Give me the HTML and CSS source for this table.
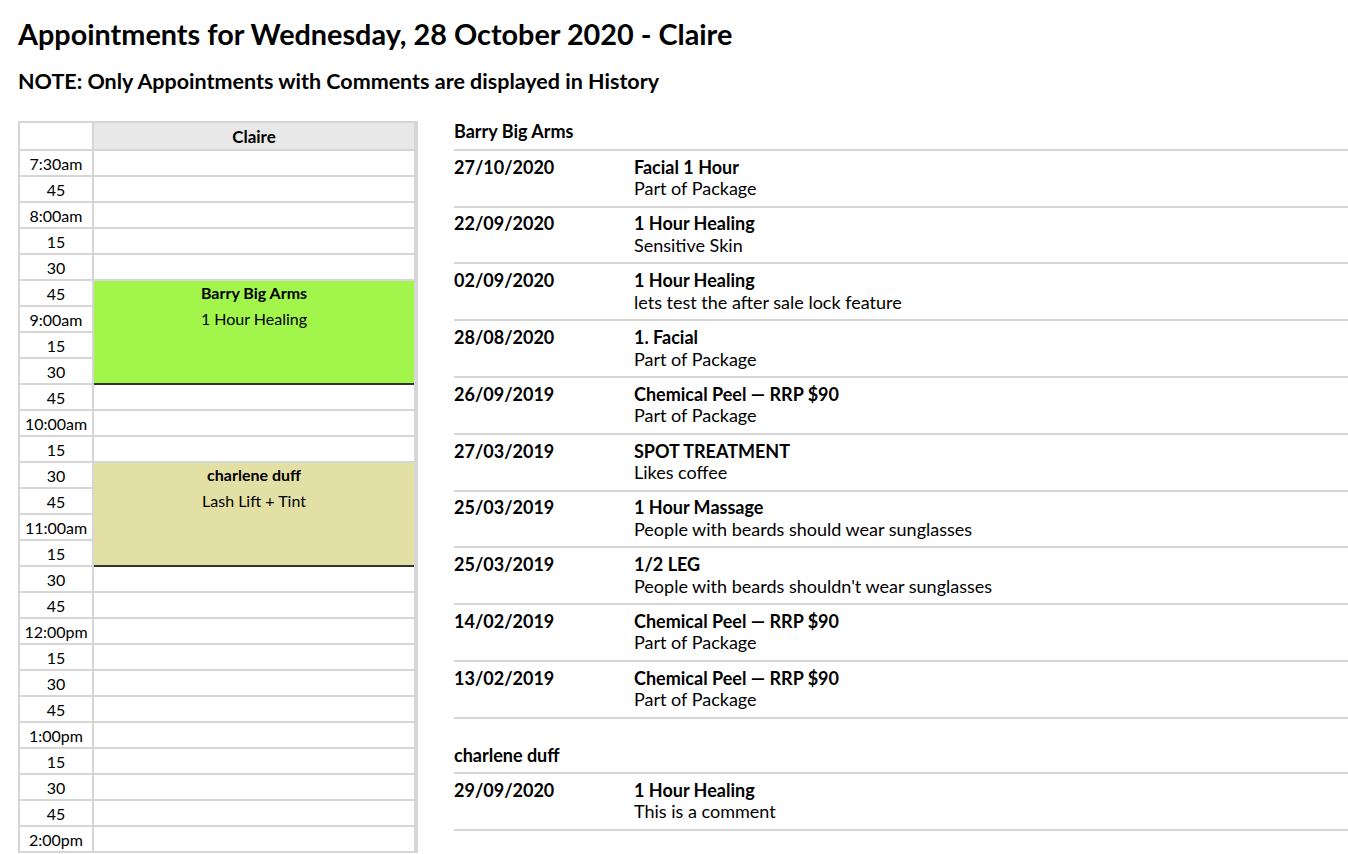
FILE: index.html
```html
<!DOCTYPE html>
<html>
<head>
<meta charset="utf-8">
<link rel="stylesheet" href="styles.css">
</head>
<body>
<h1 class="title">Appointments for Wednesday, 28 October 2020 - Claire</h1>
<h2 class="note">NOTE: Only Appointments with Comments are displayed in History</h2>
<div class="main">
  <div class="sched">
    <div class="hd"></div><div class="hd name">Claire</div>
    <div class="tm">7:30am</div><div class="slot"></div>
    <div class="tm">45</div><div class="slot"></div>
    <div class="tm">8:00am</div><div class="slot"></div>
    <div class="tm">15</div><div class="slot"></div>
    <div class="tm">30</div><div class="slot"></div>
    <div class="tm">45</div><div class="appt green"><div class="who">Barry Big Arms</div><div class="svc">1 Hour Healing</div></div>
    <div class="tm">9:00am</div>
    <div class="tm">15</div>
    <div class="tm">30</div>
    <div class="tm">45</div><div class="slot"></div>
    <div class="tm">10:00am</div><div class="slot"></div>
    <div class="tm">15</div><div class="slot"></div>
    <div class="tm">30</div><div class="appt khaki"><div class="who">charlene duff</div><div class="svc">Lash Lift + Tint</div></div>
    <div class="tm">45</div>
    <div class="tm">11:00am</div>
    <div class="tm">15</div>
    <div class="tm">30</div><div class="slot"></div>
    <div class="tm">45</div><div class="slot"></div>
    <div class="tm">12:00pm</div><div class="slot"></div>
    <div class="tm">15</div><div class="slot"></div>
    <div class="tm">30</div><div class="slot"></div>
    <div class="tm">45</div><div class="slot"></div>
    <div class="tm">1:00pm</div><div class="slot"></div>
    <div class="tm">15</div><div class="slot"></div>
    <div class="tm">30</div><div class="slot"></div>
    <div class="tm">45</div><div class="slot"></div>
    <div class="tm">2:00pm</div><div class="slot"></div>
  </div>
  <div class="history">
    <div class="client">
      <div class="cname">Barry Big Arms</div>
      <div class="row"><div class="date">27/10/2020</div><div class="info"><div class="svc-name">Facial 1 Hour</div><div class="cmt">Part of Package</div></div></div>
      <div class="row"><div class="date">22/09/2020</div><div class="info"><div class="svc-name">1 Hour Healing</div><div class="cmt">Sensitive Skin</div></div></div>
      <div class="row"><div class="date">02/09/2020</div><div class="info"><div class="svc-name">1 Hour Healing</div><div class="cmt">lets test the after sale lock feature</div></div></div>
      <div class="row"><div class="date">28/08/2020</div><div class="info"><div class="svc-name">1. Facial</div><div class="cmt">Part of Package</div></div></div>
      <div class="row"><div class="date">26/09/2019</div><div class="info"><div class="svc-name">Chemical Peel — RRP $90</div><div class="cmt">Part of Package</div></div></div>
      <div class="row"><div class="date">27/03/2019</div><div class="info"><div class="svc-name">SPOT TREATMENT</div><div class="cmt">Likes coffee</div></div></div>
      <div class="row"><div class="date">25/03/2019</div><div class="info"><div class="svc-name">1 Hour Massage</div><div class="cmt">People with beards should wear sunglasses</div></div></div>
      <div class="row"><div class="date">25/03/2019</div><div class="info"><div class="svc-name">1/2 LEG</div><div class="cmt">People with beards shouldn't wear sunglasses</div></div></div>
      <div class="row"><div class="date">14/02/2019</div><div class="info"><div class="svc-name">Chemical Peel — RRP $90</div><div class="cmt">Part of Package</div></div></div>
      <div class="row"><div class="date">13/02/2019</div><div class="info"><div class="svc-name">Chemical Peel — RRP $90</div><div class="cmt">Part of Package</div></div></div>
    </div>
    <div class="client">
      <div class="cname">charlene duff</div>
      <div class="row"><div class="date">29/09/2020</div><div class="info"><div class="svc-name">1 Hour Healing</div><div class="cmt">This is a comment</div></div></div>
    </div>
  </div>
</div>
</body>
</html>
```
FILE: styles.css
```css
html, body {
  margin: 0;
  padding: 0;
  background: #fff;
}
body {
  font-family: Lato, "Open Sans", sans-serif;
  color: #000;
  padding-left: 18px;
  overflow: hidden;
}
.title {
  margin: 16.6px 0 0;
  font-size: 28.8px;
  font-weight: 700;
  line-height: 1.2;
}
.note {
  margin: 17.5px 0 0;
  font-size: 21.5px;
  font-weight: 700;
  line-height: 1.2;
}
.main {
  display: flex;
  align-items: flex-start;
  gap: 36px;
  margin-top: 27px;
}
.sched {
  flex: none;
  display: grid;
  grid-template-columns: 72px 320px;
  grid-template-rows: 26px;
  grid-auto-rows: 24px;
  gap: 2px;
  padding: 2px 4px 2px 2px;
  background: #d6d6d6;
  font-size: 16px;
}
.hd {
  background: #fff;
}
.hd.name {
  background: #e8e8e8;
  font-weight: 700;
  font-size: 17px;
  display: flex;
  align-items: center;
  justify-content: center;
}
.tm {
  grid-column: 1;
  background: #fff;
  display: flex;
  align-items: center;
  justify-content: center;
}
.slot {
  grid-column: 2;
  background: #fff;
}
.appt {
  grid-column: 2;
  grid-row: span 4;
  display: flex;
  flex-direction: column;
  align-items: center;
  gap: 2px;
  box-shadow: 0 2px 0 #333;
}
.appt .who, .appt .svc {
  height: 24px;
  line-height: 24px;
}
.appt .who {
  font-weight: 700;
}
.green {
  background: #a1f54b;
}
.khaki {
  background: #e3e0a5;
}
.history {
  flex: 1;
  font-size: 18px;
  line-height: 1.2;
}
.client + .client {
  margin-top: 26px;
}
.cname {
  font-weight: 700;
  padding-bottom: 5.8px;
  border-bottom: 2px solid #d6d6d6;
}
.row {
  display: flex;
  padding: 5.8px 0;
  border-bottom: 2px solid #d6d6d6;
}
.date {
  width: 180px;
  flex: none;
  font-weight: 700;
}
.svc-name {
  font-weight: 700;
}
```
